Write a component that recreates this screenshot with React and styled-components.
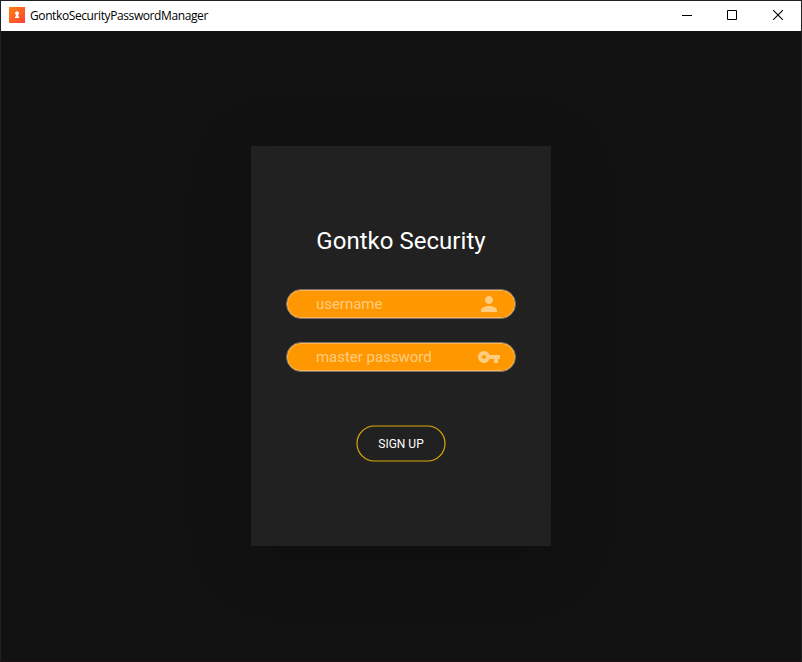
import React from "react";
import styled, { createGlobalStyle } from "styled-components";

const GlobalStyle = createGlobalStyle`
  * { box-sizing: border-box; }
  body { margin: 0; background: #121212; }
`;

const Window = styled.div`
  width: 802px;
  height: 662px;
  border: 1px solid #212022;
  border-bottom-color: #1d1317;
  background: #121212;
  display: flex;
  flex-direction: column;
  overflow: hidden;
`;

const TitleBar = styled.header`
  height: 30px;
  flex: none;
  background: #fff;
  display: flex;
  align-items: center;
  padding: 0 0 2px 8px;
`;

const Title = styled.span`
  margin: 2px 0 0 4px;
  flex: 1;
  font: 12px/16px "Open Sans", sans-serif;
  letter-spacing: -0.4px;
  color: #000;
`;

const ControlButton = styled.button`
  width: 46px;
  height: 28px;
  padding: 0;
  border: 0;
  background: none;
  display: grid;
  place-items: center;
  &:first-of-type { width: 45px; }
`;

const Content = styled.main`
  flex: 1;
  display: flex;
  justify-content: center;
  padding-top: 115px;
`;

const Card = styled.form`
  width: 300px;
  height: 400px;
  background: #212121;
  box-shadow: 0 12px 62px rgba(0, 0, 0, 0.24);
  display: flex;
  flex-direction: column;
  align-items: center;
  font-family: Roboto, sans-serif;
`;

const Heading = styled.h1`
  margin: 79px 0 0;
  font-size: 24px;
  font-weight: 400;
  line-height: 32px;
  letter-spacing: 0.03px;
  color: #fff;
`;

const Fields = styled.div`
  margin-top: 32px;
  display: flex;
  flex-direction: column;
  gap: 23px;
`;

const Field = styled.label`
  width: 230px;
  height: 30px;
  border: 1px solid #77736c;
  border-radius: 15px;
  background: #ff9800;
  box-shadow: inset 0 0 0 1px #ffb64c;
  display: flex;
  align-items: center;
  padding: 0 14px 0 29px;
`;

const Input = styled.input`
  flex: 1;
  min-width: 0;
  padding: 0;
  border: 0;
  outline: 0;
  background: none;
  font: 15px/20px Roboto, sans-serif;
  letter-spacing: -0.03px;
  &::placeholder { color: #ffcc80; opacity: 1; }
`;

const FieldIcon = styled.svg`
  width: 24px;
  height: 24px;
  flex: none;
  fill: #ffcc80;
`;

const SignUp = styled.button`
  position: relative;
  margin-top: 53px;
  width: 90px;
  height: 38px;
  padding: 0;
  border: 0;
  background: none;
  color: #fff;
  font: 12px/16px Roboto, sans-serif;
`;

const Outline = styled.svg`
  position: absolute;
  inset: 0;
  width: 90px;
  height: 38px;
  fill: none;
  stroke: #e0a80a;
  stroke-width: 1.2;
`;

const fields = [
  {
    label: "username",
    type: "text",
    path: "M12 12c2.21 0 4-1.79 4-4s-1.79-4-4-4-4 1.79-4 4 1.79 4 4 4zm0 2c-2.67 0-8 1.34-8 4v2h16v-2c0-2.66-5.33-4-8-4z",
  },
  {
    label: "master password",
    type: "password",
    path: "M12.65 10C11.83 7.67 9.61 6 7 6c-3.31 0-6 2.69-6 6s2.69 6 6 6c2.61 0 4.83-1.67 5.65-4H17v4h4v-4h2v-4H12.65zM7 14c-1.1 0-2-.9-2-2s.9-2 2-2 2 .9 2 2-.9 2-2 2z",
  },
];

function AppIcon() {
  return (
    <svg width="17" height="16" viewBox="0 0 17 16">
      <defs>
        <linearGradient id="flame" x1="0" y1="0" x2="1" y2="1">
          <stop offset="0" stopColor="#ff8208" />
          <stop offset="1" stopColor="#ff403f" />
        </linearGradient>
      </defs>
      <rect width="16" height="16" fill="url(#flame)" />
      <path d="M8 4l2 1.6v1.2l-.7.6V9.5h.7V11H6V9.5h.9V7.2H6V5.6z" fill="#fff" />
    </svg>
  );
}

export default function App() {
  return (
    <>
      <GlobalStyle />
      <Window>
        <TitleBar>
          <AppIcon />
          <Title>GontkoSecurityPasswordManager</Title>
          <ControlButton aria-label="Minimize">
            <svg width="10" height="10"><path d="M0 5.5h10" stroke="#000" /></svg>
          </ControlButton>
          <ControlButton aria-label="Maximize">
            <svg width="10" height="10"><path d="M.5.5h9v9h-9z" stroke="#000" fill="none" /></svg>
          </ControlButton>
          <ControlButton aria-label="Close">
            <svg width="10" height="10"><path d="M0 0l10 10M10 0L0 10" stroke="#000" strokeWidth="1.1" /></svg>
          </ControlButton>
        </TitleBar>
        <Content>
          <Card>
            <Heading>Gontko Security</Heading>
            <Fields>
              {fields.map((f) => (
                <Field key={f.label}>
                  <Input type={f.type} placeholder={f.label} />
                  <FieldIcon viewBox="0 0 24 24"><path d={f.path} /></FieldIcon>
                </Field>
              ))}
            </Fields>
            <SignUp type="button">
              <Outline viewBox="0 0 90 38" aria-hidden="true">
                <rect x="1" y="1" width="88" height="35" rx="17.5" />
              </Outline>
              SIGN UP
            </SignUp>
          </Card>
        </Content>
      </Window>
    </>
  );
}
